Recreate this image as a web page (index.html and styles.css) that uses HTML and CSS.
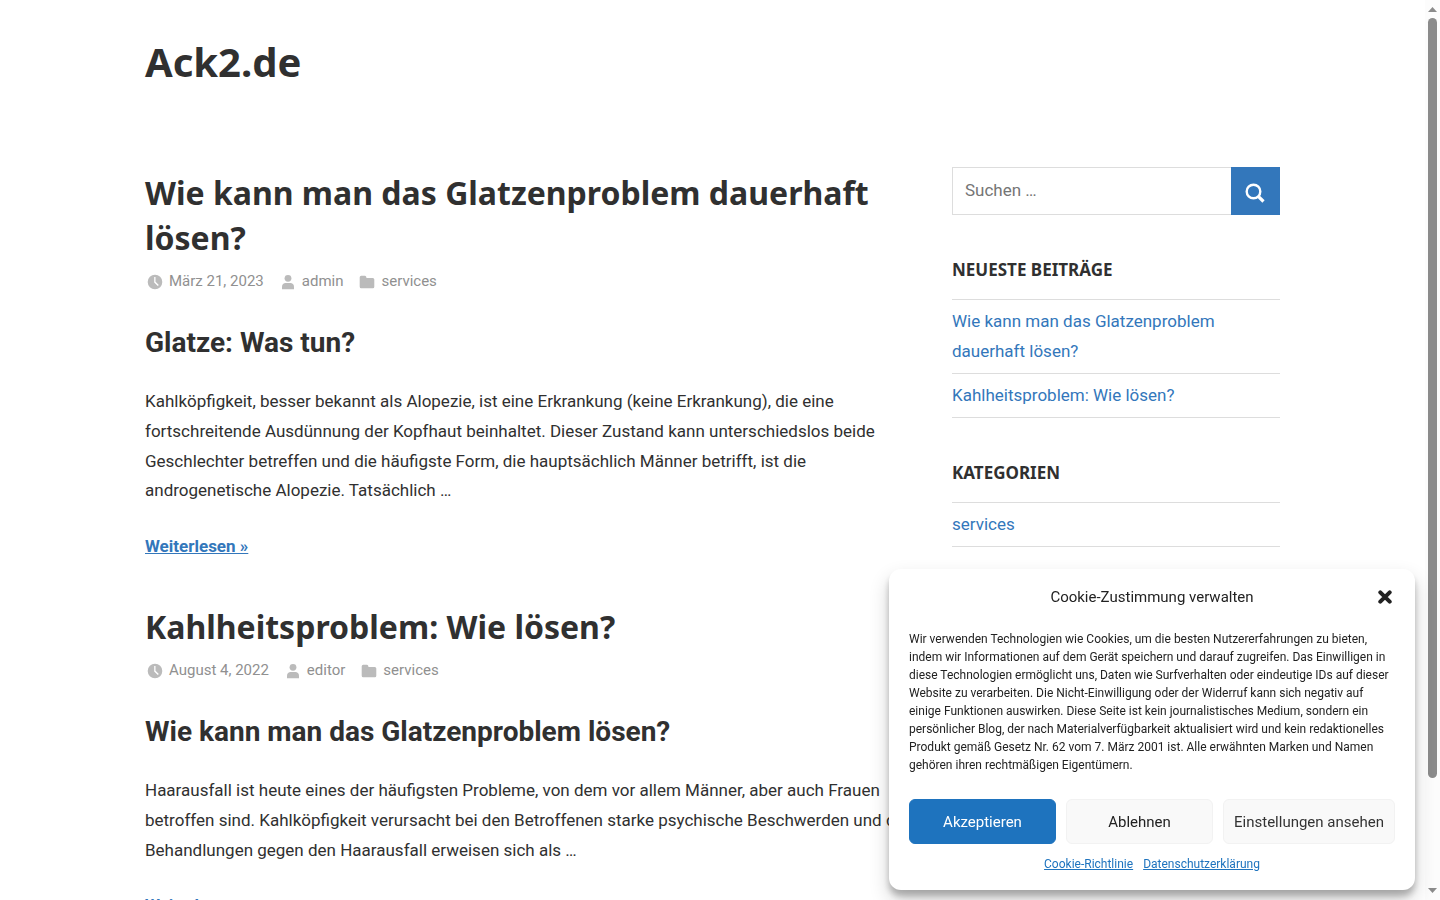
FILE: index.html
```html
<!DOCTYPE html>
<html lang="de">
<head>
<meta charset="utf-8">
<meta name="viewport" content="width=device-width, initial-scale=1">
<title>Ack2.de</title>
<link rel="stylesheet" href="styles.css">
</head>
<body>
<svg class="sprite" aria-hidden="true">
  <symbol id="clock" viewBox="0 0 16 16"><path fill-rule="evenodd" d="M8 .7a7.300 7.300 0 1 0 0 14.600A7.300 7.300 0 0 0 8 .7zM7.200 3h1.300v4.700l3.300 3.300-1 1.100-3.600-3.700z"/></symbol>
  <symbol id="user" viewBox="0 0 16 16"><circle cx="8" cy="4.300" r="3.400"/><path d="M2 15.200v-2.700C2 10.200 3.700 9 5.600 9h4.800c1.900 0 3.600 1.200 3.600 3.500v2.700z"/></symbol>
  <symbol id="folder" viewBox="0 0 16 16"><path d="M.7 3.200q0-1.500 1.500-1.500h3.600q1 0 1.400 1L7.500 4h6.300q1.500 0 1.500 1.500v7.300q0 1.500-1.500 1.500H2.200q-1.500 0-1.500-1.500z"/></symbol>
</svg>
<div class="viewport">
  <div class="page">
    <header class="site-header"><a class="site-title" href="#">Ack2.de</a></header>
    <div class="content">
      <main class="posts">
        <article class="post">
          <h2 class="post-title"><a href="#">Wie kann man das Glatzenproblem dauerhaft lösen?</a></h2>
          <div class="meta">
            <a class="meta-item" href="#"><svg class="icon"><use href="#clock"/></svg>März 21, 2023</a>
            <a class="meta-item" href="#"><svg class="icon"><use href="#user"/></svg>admin</a>
            <a class="meta-item" href="#"><svg class="icon"><use href="#folder"/></svg>services</a>
          </div>
          <h3 class="post-subtitle">Glatze: Was tun?</h3>
          <p class="excerpt">Kahlköpfigkeit, besser bekannt als Alopezie, ist eine Erkrankung (keine Erkrankung), die eine fortschreitende Ausdünnung der Kopfhaut beinhaltet. Dieser Zustand kann unterschiedslos beide Geschlechter betreffen und die häufigste Form, die hauptsächlich Männer betrifft, ist die androgenetische Alopezie. Tatsächlich …</p>
          <a class="more" href="#">Weiterlesen »</a>
        </article>
        <article class="post">
          <h2 class="post-title"><a href="#">Kahlheitsproblem: Wie lösen?</a></h2>
          <div class="meta">
            <a class="meta-item" href="#"><svg class="icon"><use href="#clock"/></svg>August 4, 2022</a>
            <a class="meta-item" href="#"><svg class="icon"><use href="#user"/></svg>editor</a>
            <a class="meta-item" href="#"><svg class="icon"><use href="#folder"/></svg>services</a>
          </div>
          <h3 class="post-subtitle">Wie kann man das Glatzenproblem lösen?</h3>
          <p class="excerpt">Haarausfall ist heute eines der häufigsten Probleme, von dem vor allem Männer, aber auch Frauen betroffen sind. Kahlköpfigkeit verursacht bei den Betroffenen starke psychische Beschwerden und die Behandlungen gegen den Haarausfall erweisen sich als …</p>
          <a class="more" href="#">Weiterlesen »</a>
        </article>
      </main>
      <aside class="sidebar">
        <form class="search" role="search">
          <input class="search-field" type="search" placeholder="Suchen …" aria-label="Suchen nach">
          <button class="search-button" type="button" aria-label="Suchen"><svg class="search-icon" viewBox="0 0 20 20"><circle cx="8.500" cy="8.500" r="6.800"/><path class="handle" d="M13.300 13.300l5.200 5.200"/></svg></button>
        </form>
        <section class="widget">
          <h3 class="widget-title">Neueste Beiträge</h3>
          <ul class="widget-list">
            <li><a href="#">Wie kann man das Glatzenproblem dauerhaft lösen?</a></li>
            <li><a href="#">Kahlheitsproblem: Wie lösen?</a></li>
          </ul>
        </section>
        <section class="widget">
          <h3 class="widget-title">Kategorien</h3>
          <ul class="widget-list">
            <li><a href="#">services</a></li>
          </ul>
        </section>
      </aside>
    </div>
  </div>
  <div class="scrollbar" aria-hidden="true">
    <svg class="arrow" viewBox="0 0 9 5"><path d="M0 5L4.500 0 9 5z"/></svg>
    <div class="track"><div class="thumb"></div></div>
    <svg class="arrow" viewBox="0 0 9 5"><path d="M0 0L4.500 5 9 0z"/></svg>
  </div>
</div>
<div class="cookie" role="dialog" aria-labelledby="cookie-title">
  <div class="cookie-head">
    <div class="cookie-title" id="cookie-title">Cookie-Zustimmung verwalten</div>
    <button class="cookie-close" type="button" aria-label="Dialog schließen"><svg viewBox="0 0 14 14"><path d="M2.300 2.300l9.400 9.400M11.700 2.300l-9.400 9.400"/></svg></button>
  </div>
  <p class="cookie-text">Wir verwenden Technologien wie Cookies, um die besten Nutzererfahrungen zu bieten, indem wir Informationen auf dem Gerät speichern und darauf zugreifen. Das Einwilligen in diese Technologien ermöglicht uns, Daten wie Surfverhalten oder eindeutige IDs auf dieser Website zu verarbeiten. Die Nicht-Einwilligung oder der Widerruf kann sich negativ auf einige Funktionen auswirken. Diese Seite ist kein journalistisches Medium, sondern ein persönlicher Blog, der nach Materialverfügbarkeit aktualisiert wird und kein redaktionelles Produkt gemäß Gesetz Nr. 62 vom 7. März 2001 ist. Alle erwähnten Marken und Namen gehören ihren rechtmäßigen Eigentümern.</p>
  <div class="cookie-buttons">
    <button class="btn btn-accept" type="button">Akzeptieren</button>
    <button class="btn" type="button">Ablehnen</button>
    <button class="btn btn-settings" type="button">Einstellungen ansehen</button>
  </div>
  <div class="cookie-links"><a href="#">Cookie-Richtlinie</a><a href="#">Datenschutzerklärung</a></div>
</div>
</body>
</html>
```

FILE: styles.css
```css
* { box-sizing: border-box; }
body {
  margin: 0;
  background: #fff;
  color: #303030;
  font: 17px/30px Roboto, sans-serif;
  overflow: hidden;
}
a { color: #3377bb; text-decoration: none; }
h2, h3, p, ul { margin: 0; }
.sprite { display: none; }
.viewport { display: flex; height: 100vh; }
.page { flex: 1; min-width: 0; overflow: hidden; padding: 0 145px; }

.site-header { padding: 33px 0 77px; }
.site-title {
  display: block;
  color: #303030;
  font: bold 40px/57px "Noto Sans", sans-serif;
}
.content {
  display: grid;
  grid-template-columns: minmax(0, 1fr) 328px;
  gap: 40px;
  align-items: start;
}
.posts { display: grid; gap: 43px; padding-top: 3px; }
.post-title { font: bold 32px/45px "Noto Sans", sans-serif; }
.post-title a { color: inherit; }
.meta { display: flex; gap: 14px; padding-top: 9px; }
.meta-item {
  display: flex;
  align-items: center;
  gap: 6px;
  color: #909090;
  font-size: 15px;
  line-height: 24px;
}
.icon { width: 16px; height: 16px; margin: 2px 0 0 2px; fill: #bbb; }
.post-subtitle { padding-top: 30px; font-size: 28px; line-height: 39px; }
.excerpt { padding: 25px 0; line-height: 1.75; }
.more { font-weight: bold; text-decoration: underline; }

.sidebar { display: grid; gap: 40px; }
.search { display: flex; height: 48px; }
.search-field {
  flex: 1;
  min-width: 0;
  margin: 0;
  padding: 0 12px 2px;
  border: 1px solid #ddd;
  border-right: 0;
  background: #fff;
  color: #303030;
  font: 17px Roboto, sans-serif;
  appearance: none;
}
.search-field::placeholder { color: #757575; }
.search-button {
  display: grid;
  place-items: center;
  width: 49px;
  padding: 3px 2px 0 0;
  border: 0;
  background: #3377bb;
}
.search-icon {
  width: 20px;
  height: 20px;
  fill: none;
  stroke: #fff;
  stroke-width: 2.4;
}
.handle { stroke-width: 3.2; }
.widget-title {
  padding-bottom: 14px;
  border-bottom: 1px solid #ddd;
  font: bold 17px/30px "Noto Sans", sans-serif;
  text-transform: uppercase;
}
.widget-list { padding: 0; list-style: none; }
.widget-list li { padding: 6px 0 7px; border-bottom: 1px solid #ddd; }

.scrollbar {
  display: flex;
  flex-direction: column;
  align-items: center;
  gap: 6px;
  width: 15px;
  padding: 7px 0;
  background: #fcfcfc;
}
.arrow { width: 9px; height: 5px; fill: #8b8b8b; }
.track { flex: 1; width: 9px; }
.thumb { height: 88%; border-radius: 5px; background: #8b8b8b; }

.cookie {
  position: fixed;
  right: 25px;
  bottom: 10px;
  width: 526px;
  padding: 15px 20px 17px;
  border-radius: 12px;
  background: #fff;
  box-shadow: rgba(0, 0, 0, 0.19) 0 10px 20px, rgba(0, 0, 0, 0.23) 0 6px 6px;
  color: #222;
}
.cookie-head { display: grid; grid-template-columns: 20px 1fr 20px; align-items: center; }
.cookie-title {
  grid-column: 2;
  font-size: 15px;
  line-height: 26px;
  text-align: center;
}
.cookie-close {
  display: grid;
  place-items: center;
  padding: 0;
  border: 0;
  background: none;
}
.cookie-close svg {
  width: 14px;
  height: 14px;
  stroke: #222;
  stroke-width: 4;
  stroke-linecap: round;
}
.cookie-text { padding: 20px 0 25px; font-size: 12px; line-height: 18px; }
.cookie-buttons { display: grid; grid-template-columns: 1fr 1fr 172px; gap: 10px; }
.btn {
  height: 45px;
  padding: 0;
  border: 1px solid #f2f2f2;
  border-radius: 6px;
  background: #f9f9f9;
  color: #222;
  font: 15px Roboto, sans-serif;
}
.btn-accept { border-color: #1e73be; background: #1e73be; color: #fff; }
.btn-settings { color: #333; }
.cookie-links {
  display: flex;
  justify-content: center;
  gap: 10px;
  padding-top: 11px;
  font-size: 12px;
  line-height: 18px;
}
.cookie-links a { color: #1e73be; text-decoration: underline; }
```
